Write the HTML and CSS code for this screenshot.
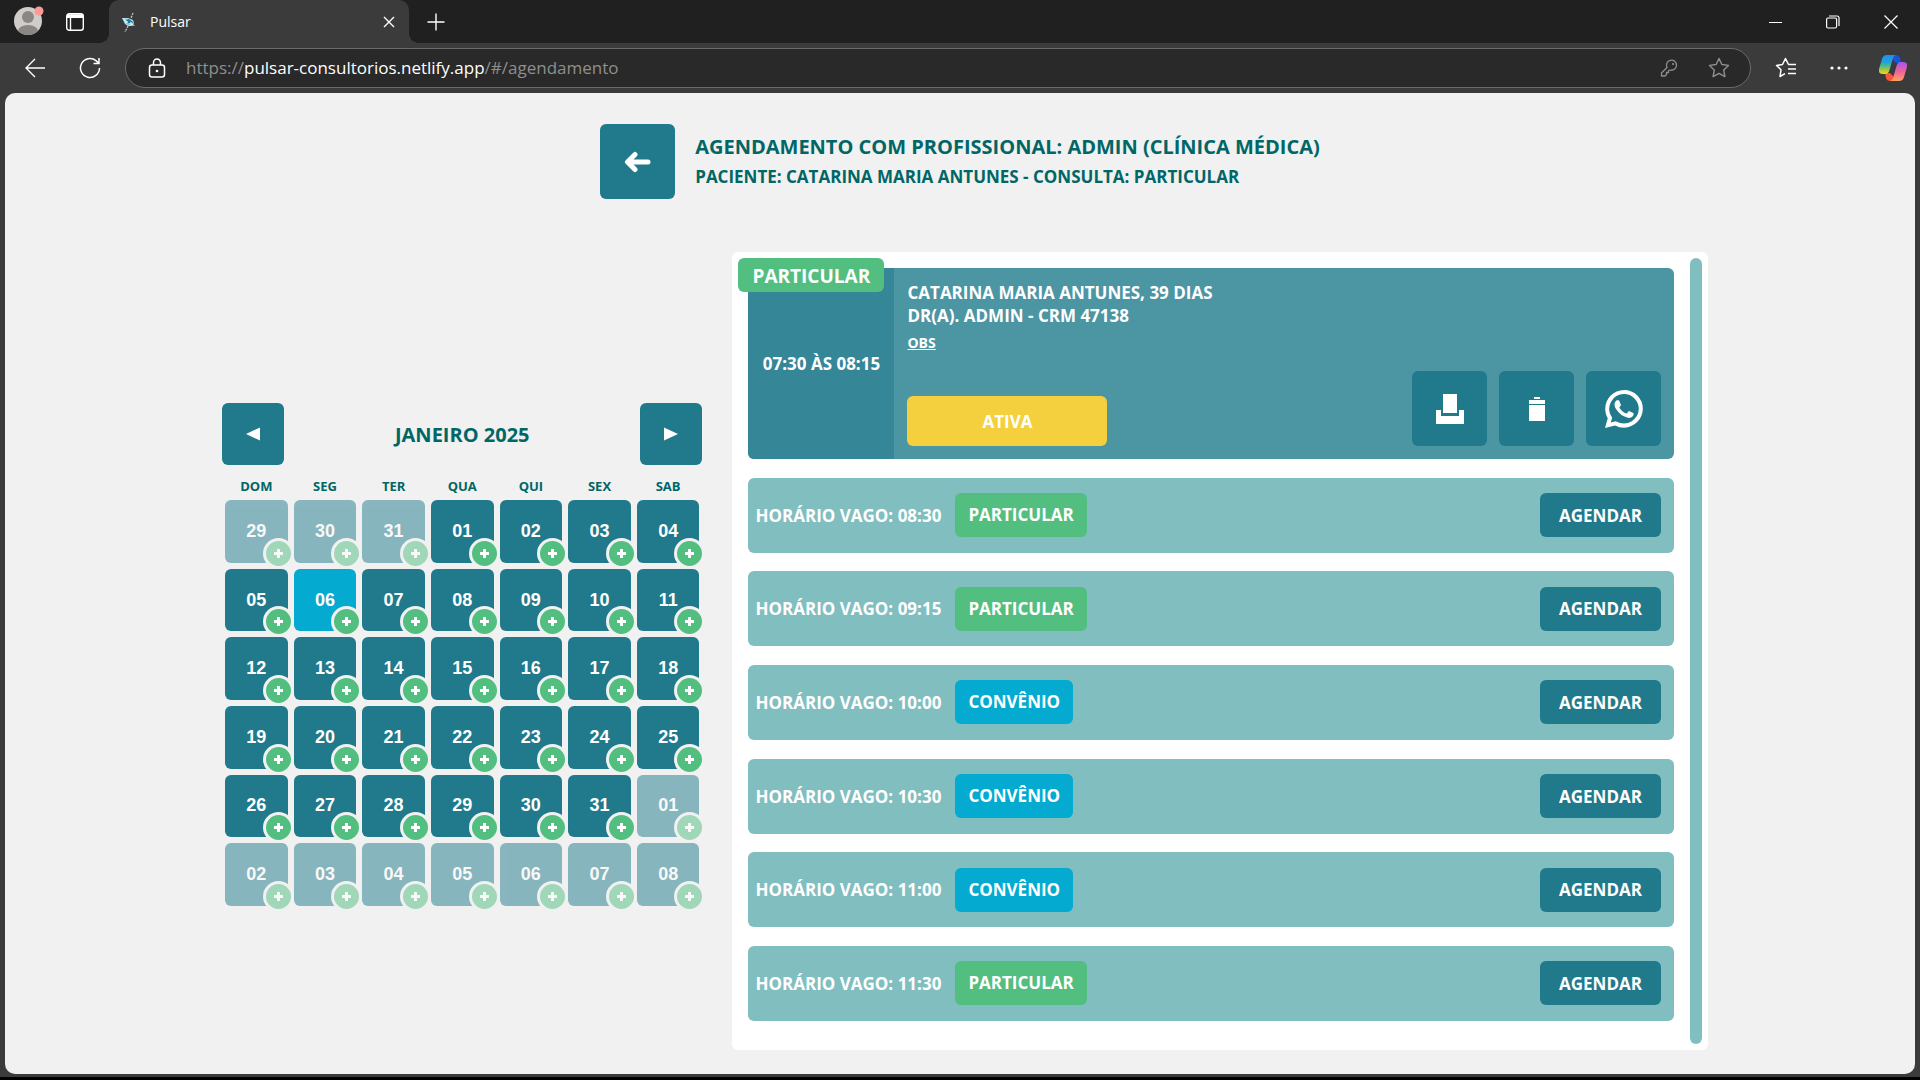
FILE: index.html
```
<!DOCTYPE html>
<html lang="pt-BR">

<head>
    <meta charset="UTF-8">
    <meta name="viewport" content="width=device-width, initial-scale=1.0">
    <link rel="stylesheet" href="styles.css">
    <title>Pulsar</title>
</head>

<body>

    <header class="browser">
        <div class="tab-bar">
            <button class="icon-button avatar" aria-label="Perfil">
                <svg width="32" height="32" viewBox="0 0 32 32">
                    <defs>
                        <clipPath id="avatarClip"><circle cx="15" cy="17" r="14" /></clipPath>
                    </defs>
                    <circle cx="15" cy="17" r="14" fill="#cfccc9" />
                    <circle cx="15" cy="13" r="6" fill="#8b8783" />
                    <ellipse cx="15" cy="27" rx="10" ry="6" fill="#8b8783" clip-path="url(#avatarClip)" />
                    <circle cx="26" cy="7" r="4.5" fill="#ff9a94" />
                </svg>
            </button>
            <button class="icon-button workspaces" aria-label="Guias">
                <svg width="20" height="20" viewBox="0 0 20 20" fill="none" stroke="#fff" stroke-width="1.4">
                    <rect x="1.7" y="1.7" width="16.6" height="16.6" rx="2.5" />
                    <path d="M2 4h16M2 3h16M2 5.2h16" stroke-width="1.6" />
                    <path d="M5.5 6v12" />
                </svg>
            </button>
            <div class="tab">
                <svg class="favicon" width="16" height="24" viewBox="0 0 16 24">
                    <path d="M11 3L9 8M6 16l-3 6" stroke="#b9cdd6" stroke-width="1.3" stroke-dasharray="2 1" />
                    <path d="M0 8l6 0 5 2 1 3-2 3-4 0-3-2z" fill="#b4dcea" />
                    <path d="M3 10l4-1 4 3-1 3-5-1z" fill="#1c7d9c" />
                    <path d="M0 8l5 3 4 1 4 4-4-1-5-2z" fill="#d3eef7" />
                    <circle cx="7" cy="12" r="1.5" fill="#1c7d9c" />
                </svg>
                <span class="tab-title">Pulsar</span>
                <button class="icon-button" aria-label="Fechar guia">
                    <svg width="12" height="12" viewBox="0 0 12 12" stroke="#fff" stroke-width="1.4">
                        <path d="M1 1l10 10M11 1L1 11" />
                    </svg>
                </button>
            </div>
            <button class="icon-button new-tab" aria-label="Nova guia">
                <svg width="18" height="18" viewBox="0 0 18 18" stroke="#fff" stroke-width="1.4">
                    <path d="M9 0.5v17M0.5 9h17" />
                </svg>
            </button>
            <div class="window-buttons">
                <button class="icon-button" aria-label="Minimizar">
                    <svg width="14" height="14" viewBox="0 0 14 14" stroke="#fff">
                        <path d="M1 7.5h13" />
                    </svg>
                </button>
                <button class="icon-button" aria-label="Restaurar">
                    <svg width="14" height="14" viewBox="0 0 14 14" fill="none" stroke="#fff" stroke-width="1.2">
                        <rect x="0.6" y="3" width="10" height="10" rx="1.5" />
                        <path d="M3 1h8q2 0 2 2v8" />
                    </svg>
                </button>
                <button class="icon-button" aria-label="Fechar">
                    <svg width="14" height="14" viewBox="0 0 14 14" stroke="#fff" stroke-width="1.2">
                        <path d="M0.5 0.5l13 13M13.5 0.5l-13 13" />
                    </svg>
                </button>
            </div>
        </div>

        <div class="toolbar">
            <button class="icon-button" aria-label="Voltar">
                <svg width="22" height="20" viewBox="0 0 22 20" fill="none" stroke="#fff" stroke-width="1.4">
                    <path d="M21 10H2M11 1L2 10l9 9" />
                </svg>
            </button>
            <button class="icon-button" aria-label="Atualizar">
                <svg width="22" height="22" viewBox="0 0 22 22" fill="none" stroke="#fff" stroke-width="1.5">
                    <path d="M20.5 11a9.500 9.500 0 1 1-3.500-7.400l2.500 2.400M20 1v5.500h-5.500" />
                </svg>
            </button>
            <div class="address-bar">
                <svg width="18" height="20" viewBox="0 0 18 20" fill="none" stroke="#fff" stroke-width="1.5">
                    <rect x="1.5" y="7" width="15" height="12" rx="2.5" />
                    <path d="M5.5 7V4.500a3.500 3.500 0 0 1 7 0V7" />
                    <circle cx="9" cy="13" r="1.3" fill="#fff" stroke="none" />
                </svg>
                <div class="url">https://<span>pulsar-consultorios.netlify.app</span>/#/agendamento</div>
                <button class="icon-button key" aria-label="Senhas">
                    <svg width="18" height="18" viewBox="0 0 18 18" fill="none" stroke="#8f8f8f" stroke-width="1.3">
                        <path d="M7 8.500A5 5 0 1 1 10 11L8.500 11.500v2H6.500v2L5 17H1.500v-3z" stroke-linejoin="round" />
                        <circle cx="13" cy="5" r="1.1" fill="#8f8f8f" stroke="none" />
                    </svg>
                </button>
                <button class="icon-button" aria-label="Favoritar">
                    <svg width="22" height="22" viewBox="0 0 22 22" fill="none" stroke="#8f8f8f" stroke-width="1.4" stroke-linejoin="round">
                        <path d="M11 1.500l2.900 6 6.600 0.900-4.800 4.600 1.200 6.600-5.900-3.200-5.900 3.200 1.200-6.600L1.500 8.400l6.600-0.900z" />
                    </svg>
                </button>
            </div>
            <button class="icon-button favorites" aria-label="Favoritos">
                <svg width="22" height="22" viewBox="0 0 22 22" fill="none" stroke="#fff" stroke-width="1.5" stroke-linejoin="round">
                    <path d="M21 7.500h-7.500L10.500 1.500 7.500 7.500 1.500 8.400l4.500 4.400-1 6.700 5-2.800" />
                    <path d="M13 12h8M13 16.500h8" />
                </svg>
            </button>
            <button class="icon-button dots" aria-label="Mais">
                <svg width="18" height="4" viewBox="0 0 18 4" fill="#fff">
                    <circle cx="2" cy="2" r="1.6" />
                    <circle cx="9" cy="2" r="1.6" />
                    <circle cx="16" cy="2" r="1.6" />
                </svg>
            </button>
            <button class="icon-button" aria-label="Copilot">
                <svg width="28" height="26" viewBox="0 0 28 26">
                    <defs>
                        <linearGradient id="copilotLeft" x1="0" y1="0" x2="0" y2="1">
                            <stop offset="0" stop-color="#1f8ff0" />
                            <stop offset="0.4" stop-color="#1fa5d8" />
                            <stop offset="0.7" stop-color="#7cc552" />
                            <stop offset="1" stop-color="#ffd21c" />
                        </linearGradient>
                        <linearGradient id="copilotRight" x1="0" y1="0" x2="0" y2="1">
                            <stop offset="0" stop-color="#a457f0" />
                            <stop offset="0.5" stop-color="#f0619c" />
                            <stop offset="1" stop-color="#ffa25c" />
                        </linearGradient>
                    </defs>
                    <path d="M13 0h4q3 0 4 3l1 5h-5l-4-4z" fill="#1a55d8" />
                    <path d="M15 26h-4q-3 0-4-3l-1-5h5l4 4z" fill="#f4583a" />
                    <path d="M8 0h9q-2 0-3 3l-3.500 12q-1 4-4.500 4H4q-5 0-4-5L3 4q1-4 5-4z" fill="url(#copilotLeft)" />
                    <path d="M20 26h-9q2 0 3-3l3.500-12q1-4 4.500-4h2q5 0 4 5l-3 10q-1 4-5 4z" fill="url(#copilotRight)" />
                </svg>
            </button>
        </div>
    </header>

    <main class="page">
        <div class="page-header">
            <button class="btn-square" aria-label="Voltar">
                <svg width="28" height="22" viewBox="0 0 28 22" fill="none" stroke="#fff" stroke-width="5" stroke-linecap="round" stroke-linejoin="round">
                    <path d="M24 11H4M11 3.500L3.500 11l7.500 7.500" />
                </svg>
            </button>
            <div>
                <h1>AGENDAMENTO COM PROFISSIONAL: ADMIN (CLÍNICA MÉDICA)</h1>
                <h2>PACIENTE: CATARINA MARIA ANTUNES - CONSULTA: PARTICULAR</h2>
            </div>
        </div>

        <div class="content">
            <section class="calendar">
                <div class="calendar-header">
                    <button class="btn-month" id="prevMonth" aria-label="Mês anterior">
                        <svg width="14" height="14" viewBox="0 0 14 14" fill="#fff"><path d="M0 7l14-6.500v13z" /></svg>
                    </button>
                    <h3 id="monthName"></h3>
                    <button class="btn-month" id="nextMonth" aria-label="Próximo mês">
                        <svg width="14" height="14" viewBox="0 0 14 14" fill="#fff"><path d="M14 7L0 0.500v13z" /></svg>
                    </button>
                </div>
                <div class="week-days">
                    <span>DOM</span>
                    <span>SEG</span>
                    <span>TER</span>
                    <span>QUA</span>
                    <span>QUI</span>
                    <span>SEX</span>
                    <span>SAB</span>
                </div>
                <div class="days" id="days"></div>
            </section>

            <section class="schedule">
                <div class="schedule-list">
                    <article class="appointment">
                        <span class="appointment-type">PARTICULAR</span>
                        <div class="appointment-time">07:30 ÀS 08:15</div>
                        <div class="appointment-info">
                            <div>
                                <p>CATARINA MARIA ANTUNES, 39 DIAS</p>
                                <p>DR(A). ADMIN - CRM 47138</p>
                                <a href="#obs">OBS</a>
                            </div>
                            <div class="appointment-footer">
                                <button class="btn-status">ATIVA</button>
                                <div class="appointment-actions">
                                    <button class="btn-square" aria-label="Imprimir">
                                        <svg width="30" height="30" viewBox="0 0 30 30" fill="#fff">
                                            <path d="M8 0h14v19H8z" />
                                            <path d="M1 16h5v6h18v-6h5v14H1z" />
                                        </svg>
                                    </button>
                                    <button class="btn-square" aria-label="Excluir">
                                        <svg width="16" height="24" viewBox="0 0 16 24" fill="#fff">
                                            <path d="M5 0h6v2H5zM0 3h16v4H0zM0 8h16v16H0z" />
                                        </svg>
                                    </button>
                                    <button class="btn-square" aria-label="WhatsApp">
                                        <svg width="38" height="38" viewBox="0 0 24 24" fill="#fff">
                                            <path d="M17.472 14.382c-.297-.149-1.758-.867-2.030-.967-.273-.099-.471-.148-.670.150-.197.297-.767.966-.940 1.164-.173.199-.347.223-.644.075-.297-.150-1.255-.463-2.390-1.475-.883-.788-1.480-1.761-1.653-2.059-.173-.297-.018-.458.130-.606.134-.133.298-.347.446-.520.149-.174.198-.298.298-.497.099-.198.050-.371-.025-.520-.075-.149-.669-1.612-.916-2.207-.242-.579-.487-.500-.669-.510-.173-.008-.371-.010-.570-.010-.198 0-.520.074-.792.372-.272.297-1.040 1.016-1.040 2.479 0 1.462 1.065 2.875 1.213 3.074.149.198 2.096 3.200 5.077 4.487.709.306 1.262.489 1.694.625.712.227 1.360.195 1.871.118.571-.085 1.758-.719 2.006-1.413.248-.694.248-1.289.173-1.413-.074-.124-.272-.198-.570-.347" />
                                            <path d="M12.051 0C5.495 0 .160 5.335.157 11.892c0 2.096.547 4.142 1.588 5.945L0 24l6.305-1.654a11.882 11.882 0 0 0 5.683 1.448h.005c6.554 0 11.890-5.335 11.893-11.893A11.821 11.821 0 0 0 20.413 3.488 11.815 11.815 0 0 0 12.051 0zM12.046 2.600a9.400 9.400 0 0 1 9.300 9.300 9.400 9.400 0 0 1-13.900 8.100l-.500-.300-3.300.900.900-3.200-.400-.500A9.300 9.300 0 0 1 12.046 2.600z" fill-rule="evenodd" />
                                        </svg>
                                    </button>
                                </div>
                            </div>
                        </div>
                    </article>

                    <div class="slot">
                        <span>HORÁRIO VAGO: 08:30</span>
                        <span class="tag particular">PARTICULAR</span>
                        <button class="btn-schedule">AGENDAR</button>
                    </div>
                    <div class="slot">
                        <span>HORÁRIO VAGO: 09:15</span>
                        <span class="tag particular">PARTICULAR</span>
                        <button class="btn-schedule">AGENDAR</button>
                    </div>
                    <div class="slot">
                        <span>HORÁRIO VAGO: 10:00</span>
                        <span class="tag convenio">CONVÊNIO</span>
                        <button class="btn-schedule">AGENDAR</button>
                    </div>
                    <div class="slot">
                        <span>HORÁRIO VAGO: 10:30</span>
                        <span class="tag convenio">CONVÊNIO</span>
                        <button class="btn-schedule">AGENDAR</button>
                    </div>
                    <div class="slot">
                        <span>HORÁRIO VAGO: 11:00</span>
                        <span class="tag convenio">CONVÊNIO</span>
                        <button class="btn-schedule">AGENDAR</button>
                    </div>
                    <div class="slot">
                        <span>HORÁRIO VAGO: 11:30</span>
                        <span class="tag particular">PARTICULAR</span>
                        <button class="btn-schedule">AGENDAR</button>
                    </div>
                </div>
                <div class="scroll-thumb"></div>
            </section>
        </div>
    </main>

    <script src="script.js"></script>
</body>

</html>
```

FILE: styles.css
```
* {
    box-sizing: border-box;
}

body {
    margin: 0;
    min-height: 100vh;
    display: flex;
    flex-direction: column;
    background-color: #3b3b3b;
    border-bottom: 3px solid #000;
    font-family: 'Open Sans', 'Noto Sans', sans-serif;
}

h1, h2, h3, p {
    margin: 0;
}

button {
    font-family: inherit;
    border: none;
    padding: 0;
    color: #fff;
    cursor: pointer;
}

svg {
    display: block;
    flex-shrink: 0;
}

/* browser */
.icon-button {
    background: none;
}

.tab-bar {
    display: flex;
    align-items: center;
    height: 43px;
    padding-left: 13px;
    background-color: #202020;
}

.avatar {
    margin-bottom: 4px;
}

.workspaces {
    margin-left: 20px;
}

.tab {
    display: flex;
    align-items: center;
    gap: 12px;
    width: 300px;
    height: 43px;
    margin-left: 24px;
    padding: 0 14px 0 13px;
    background-color: #3b3b3b;
    border-radius: 10px 10px 0 0;
    position: relative;
}

/* curved feet of the active tab */
.tab::before,
.tab::after {
    content: '';
    position: absolute;
    bottom: 0;
    width: 10px;
    height: 10px;
}

.tab::before {
    left: -10px;
    background: radial-gradient(circle at 0 0, #202020 10px, #3b3b3b 10px);
}

.tab::after {
    right: -10px;
    background: radial-gradient(circle at 100% 0, #202020 10px, #3b3b3b 10px);
}

.tab-title {
    flex: 1;
    font-size: 14px;
    line-height: 20px;
    color: #fff;
}

.new-tab {
    margin-left: 18px;
}

.window-buttons {
    display: flex;
    gap: 44px;
    margin-left: auto;
    padding-right: 22px;
}

.toolbar {
    display: flex;
    align-items: center;
    height: 50px;
    padding: 0 13px 0 24px;
    gap: 33px;
}

.address-bar {
    flex: 1;
    display: flex;
    align-items: center;
    height: 40px;
    margin-left: -9px;
    padding: 0 20px 0 22px;
    background-color: #292929;
    border: 1px solid #6b6b6b;
    border-radius: 20px;
}

.url {
    flex: 1;
    margin-left: 20px;
    font-size: 17px;
    line-height: 24px;
    color: #8f8f8f;
}

.url span {
    color: #fff;
}

.key {
    margin-right: 30px;
}

.favorites {
    margin-left: -9px;
}

.dots {
    margin-right: -2px;
}

/* page */
.page {
    flex: 1;
    display: flex;
    flex-direction: column;
    margin: 0 5px 3px;
    padding: 31px 0 24px;
    background-color: #f1f1f1;
    border-radius: 10px;
}

.page-header {
    display: flex;
    justify-content: center;
    align-items: center;
    gap: 20px;
}

.page-header h1,
.page-header h2,
.calendar h3,
.week-days {
    color: #006666;
}

.page-header h1 {
    font-size: 20px;
    line-height: 30px;
}

.page-header h2 {
    font-size: 17px;
    line-height: 30px;
}

.btn-square {
    display: flex;
    justify-content: center;
    align-items: center;
    width: 75px;
    height: 75px;
    background-color: #207a8c;
    border-radius: 6px;
}

.content {
    flex: 1;
    display: grid;
    grid-template-columns: 33fr 67fr;
    gap: 30px;
    margin: 53px 207px 0 217px;
}

/* calendar */
.calendar {
    align-self: center;
    padding-top: 10px;
}

.calendar-header {
    display: flex;
    justify-content: space-between;
    align-items: center;
}

.calendar h3 {
    font-size: 20px;
}

.btn-month {
    display: flex;
    justify-content: center;
    align-items: center;
    width: 62px;
    height: 62px;
    background-color: #207a8c;
    border-radius: 6px;
}

.week-days,
.days {
    display: grid;
    grid-template-columns: repeat(7, 1fr);
}

.week-days {
    margin-top: 10px;
    font-size: 13px;
    font-weight: bold;
    line-height: 22px;
    text-align: center;
}

.day {
    position: relative;
    aspect-ratio: 1;
    padding: 3px;
}

.day.other-month {
    opacity: 0.5;
}

.day-number {
    width: 100%;
    height: 100%;
    background-color: #207a8c;
    border-radius: 6px;
    font-family: 'Liberation Sans', Arial, sans-serif;
    font-size: 18px;
    font-weight: bold;
}

.day.selected .day-number {
    background-color: #04aad0;
}

.day-add {
    position: absolute;
    right: -3px;
    bottom: -3px;
    display: flex;
    justify-content: center;
    align-items: center;
    width: 31px;
    height: 31px;
    background-color: #52be80;
    border: 3px solid #f1f1f1;
    border-radius: 50%;
}

/* schedule */
.schedule {
    display: flex;
    gap: 16px;
    padding: 6px 6px 6px 16px;
    background-color: #fff;
    border-radius: 6px;
    color: #fff;
    font-size: 17px;
    font-weight: bold;
}

.schedule-list {
    flex: 1;
    display: flex;
    flex-direction: column;
    justify-content: space-between;
    padding: 10px 0 23px;
}

.scroll-thumb {
    width: 12px;
    background-color: #81bec0;
    border-radius: 6px;
}

.appointment {
    position: relative;
    display: flex;
    height: 191px;
    background-color: #4c95a3;
    border-radius: 6px;
}

.appointment-type {
    position: absolute;
    top: -10px;
    left: -10px;
    padding: 2px 14px 0;
    background-color: #52be80;
    border-radius: 6px;
    font-size: 19px;
    line-height: 32px;
}

.appointment-time {
    display: flex;
    justify-content: center;
    align-items: center;
    width: 146px;
    background-color: #358697;
    border-radius: 6px 0 0 6px;
}

.appointment-info {
    flex: 1;
    display: flex;
    flex-direction: column;
    justify-content: space-between;
    padding: 13px;
    line-height: 23px;
}

.appointment-info > div:first-child {
    height: 90px;
}

.appointment-info a {
    display: inline-block;
    margin-top: 6px;
    color: #fff;
    font-size: 14px;
    line-height: 20px;
}

.appointment-footer {
    display: flex;
    justify-content: space-between;
    align-items: flex-end;
}

.btn-status {
    width: 200px;
    height: 50px;
    background-color: #f4d03f;
    border-radius: 6px;
    font-size: 17px;
    font-weight: bold;
}

.appointment-actions {
    display: flex;
    gap: 12px;
}

.slot {
    display: flex;
    align-items: center;
    height: 75px;
    padding: 0 13px 0 7px;
    background-color: #81bec0;
    border-radius: 6px;
}

.tag {
    margin-left: 14px;
    padding: 0 13px;
    border-radius: 6px;
    line-height: 44px;
}

.particular {
    background-color: #52be80;
}

.convenio {
    background-color: #04aad0;
}

.btn-schedule {
    width: 121px;
    height: 44px;
    margin-left: auto;
    background-color: #207a8c;
    border-radius: 6px;
    font-size: 17px;
    font-weight: bold;
}
```

FILE: script.js
```
const months = ['JANEIRO', 'FEVEREIRO', 'MARÇO', 'ABRIL', 'MAIO', 'JUNHO', 'JULHO', 'AGOSTO', 'SETEMBRO', 'OUTUBRO', 'NOVEMBRO', 'DEZEMBRO'];

let current = new Date(2025, 0, 1);
let selected = new Date(2025, 0, 6);

function renderCalendar() {
    const year = current.getFullYear();
    const month = current.getMonth();
    const days = document.getElementById('days');

    document.getElementById('monthName').textContent = `${months[month]} ${year}`;
    days.innerHTML = '';

    // always 6 weeks, starting on sunday
    for (let i = 0; i < 42; i++) {
        const date = new Date(year, month, 1 - current.getDay() + i);
        const number = String(date.getDate()).padStart(2, '0');
        const day = document.createElement('div');
        day.className = 'day';
        if (date.getMonth() !== month) day.classList.add('other-month');
        if (date.getTime() === selected.getTime()) day.classList.add('selected');
        day.innerHTML = `<button class="day-number">${number}</button><button class="day-add" aria-label="Adicionar"><svg width="11" height="11" viewBox="0 0 11 11" fill="#fff"><path d="M4 1h3v3h3v3H7v3H4V7H1V4h3z" /></svg></button>`;
        day.querySelector('.day-number').onclick = function () {
            selected = date;
            renderCalendar();
        };
        days.appendChild(day);
    }
}

document.getElementById('prevMonth').onclick = function () {
    current = new Date(current.getFullYear(), current.getMonth() - 1, 1);
    renderCalendar();
};

document.getElementById('nextMonth').onclick = function () {
    current = new Date(current.getFullYear(), current.getMonth() + 1, 1);
    renderCalendar();
};

renderCalendar();
```
